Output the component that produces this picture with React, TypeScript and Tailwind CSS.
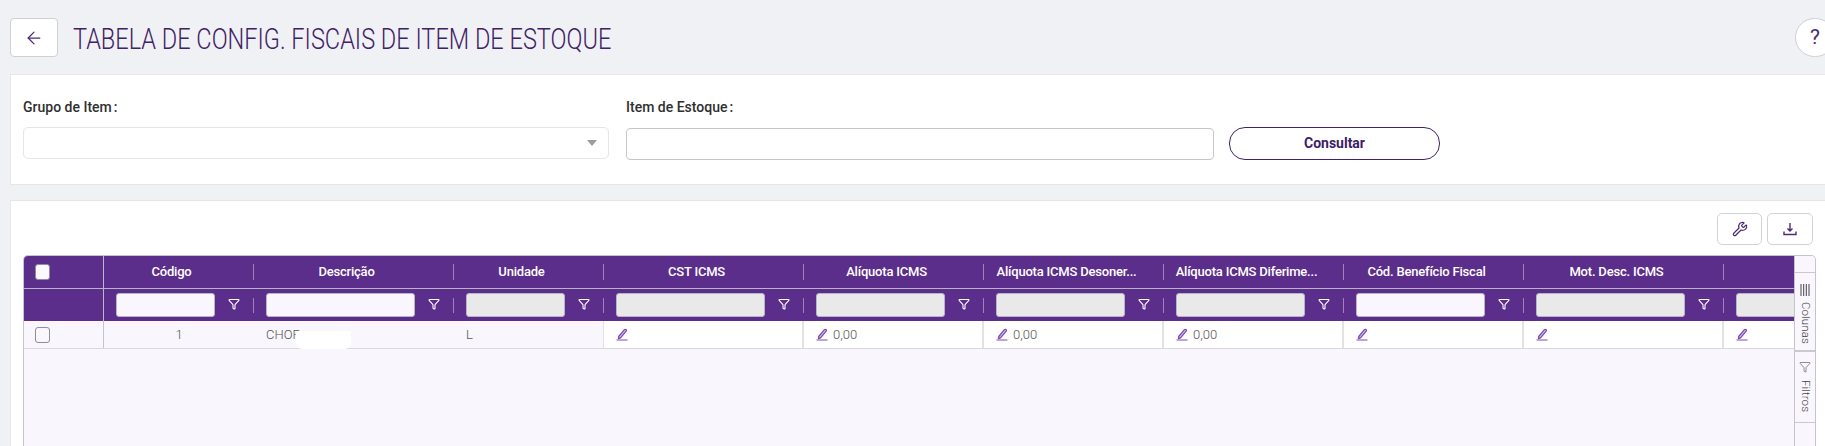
import React from "react";
import { ArrowLeft, Funnel, Wrench } from "lucide-react";

type Col = { w: string; label: string; light: boolean; editable: boolean; value?: string };

const cols: Col[] = [
  { w: "w-[150px]", label: "Código", light: true, editable: false },
  { w: "w-[200px]", label: "Descrição", light: true, editable: false },
  { w: "w-[150px]", label: "Unidade", light: false, editable: false },
  { w: "w-[200px]", label: "CST ICMS", light: false, editable: true },
  { w: "w-[180px]", label: "Alíquota ICMS", light: false, editable: true, value: "0,00" },
  { w: "w-[180px]", label: "Alíquota ICMS Desoner...", light: false, editable: true, value: "0,00" },
  { w: "w-[180px]", label: "Alíquota ICMS Diferime...", light: false, editable: true, value: "0,00" },
  { w: "w-[180px]", label: "Cód. Benefício Fiscal", light: true, editable: true },
  { w: "w-[200px]", label: "Mot. Desc. ICMS", light: false, editable: true },
  { w: "w-[200px]", label: "", light: false, editable: true },
];

function Pencil() {
  return (
    <svg width="12" height="13" viewBox="0 0 13 14" className="shrink-0 text-[#7e4bb5]">
      <path d="M3 9.2 9.1 1.8c.5-.5 1.2-.5 1.7-.1.5.4.6 1.1.2 1.6L4.9 10.7l-2.3.7z" fill="currentColor" fillOpacity="0.35" stroke="currentColor" strokeWidth="1.4" strokeLinejoin="round" />
      <path d="M0.5 13h12" stroke="currentColor" strokeWidth="1.2" />
    </svg>
  );
}

function Check({ light }: { light?: boolean }) {
  return <span className={`block w-[15px] h-[16px] rounded-[3px] border border-[#8b8f9c] ${light ? "bg-[#fbf9ff]" : "bg-[#f9f7fd]"}`} />;
}

export default function App() {
  return (
    <div className="w-[1825px] h-[446px] overflow-hidden bg-[#f0f1f5] pl-[10px] font-['Roboto',sans-serif]">
      <header className="flex items-center pt-[18px] h-[57px]">
        <button className="w-[48px] h-[39px] bg-white border border-[#cfcfd4] rounded-[4px] flex items-center justify-center text-[#4b2a75]">
          <ArrowLeft size={20} strokeWidth={1.5} />
        </button>
        <h1 className="ml-[15px] mt-[2px] text-[30px] leading-none text-[#3f2266] font-light whitespace-nowrap origin-left scale-x-[0.785]">
          TABELA DE CONFIG. FISCAIS DE ITEM DE ESTOQUE
        </h1>
        <button className="ml-auto -mr-[10px] w-10 h-[39px] rounded-full bg-white border border-[#cfcfd4] text-[#4b2a75] text-[21px] shrink-0">?</button>
      </header>

      <section className="mt-[17px] h-[111px] bg-white border-y border-l border-[#e6e6e9] pl-3 flex">
        <div className="w-[586px] shrink-0">
          <label className="block mt-[24px] h-[16px] leading-[16px] text-[14px] font-medium text-[#2f2f2f]">Grupo de Item<span className="ml-[2px]">:</span></label>
          <div className="mt-[12px] h-[32px] rounded-[5px] border border-[#e6e6e9] flex items-center justify-end pr-[11px]">
            <span className="w-0 h-0 border-x-[5px] border-x-transparent border-t-[6px] border-t-[#9b9b9b]" />
          </div>
        </div>
        <div className="w-[588px] ml-[17px] shrink-0">
          <label className="block mt-[24px] h-[16px] leading-[16px] text-[14px] font-medium text-[#2f2f2f]">Item de Estoque<span className="ml-[2px]">:</span></label>
          <div className="mt-[13px] h-[32px] rounded-[4px] border border-[#c6c6ca] bg-white" />
        </div>
        <button className="ml-[15px] mt-[52px] w-[211px] h-[33px] rounded-[16px] border border-[#40226b] text-[14px] font-bold text-[#3d2066]">
          Consultar
        </button>
      </section>

      <section className="mt-[15px] h-[260px] bg-white border-t border-l border-[#e6e6e9] pl-3 pr-[9px] overflow-hidden">
        <div className="flex justify-end gap-[5px] pt-[12px] mr-[3px]">
          <button className="w-[45px] h-[32px] rounded-[5px] border border-[#d2d2d6] flex items-center justify-center text-[#4b2a75]">
            <Wrench size={16} strokeWidth={1.8} />
          </button>
          <button className="w-[46px] h-[32px] rounded-[5px] border border-[#d2d2d6] flex items-center justify-center text-[#4b2a75]">
            <svg width="14" height="14" viewBox="0 0 14 14" fill="none" stroke="currentColor" strokeWidth="1.4">
              <path d="M7 1v7.5M4.5 6.5 7 9l2.5-2.5M1 9.5V12.5h12V9.5" />
            </svg>
          </button>
        </div>

        <div className="mt-[10px] h-[200px] flex border border-[#c4c4ca] border-b-0 rounded-t-[5px] bg-[#f9f7fd] overflow-hidden">
          <div className="flex-1 min-w-0 overflow-hidden">
            {/* Linha de títulos */}
            <div className="flex h-[33px] bg-[#5b2e8c] border-b border-[#b9b3c8]">
              <div className="w-[80px] shrink-0 border-r border-[#bdb8c9] flex items-center pl-[11px]">
                <Check light />
              </div>
              {cols.map((c, i) => (
                <div key={i} className={`${c.w} shrink-0 relative flex items-center justify-center pr-[15px] text-[13px] tracking-[-0.2px] font-medium text-white whitespace-nowrap`}>
                  {c.label}
                  <span className="absolute right-0 top-[8px] h-[16px] w-px bg-[#9c84bb]" />
                </div>
              ))}
            </div>
            {/* Linha de filtros */}
            <div className="flex h-[32px] bg-[#5b2e8c]">
              <div className="w-[80px] shrink-0 border-r border-[#bdb8c9]" />
              {cols.map((c, i) => (
                <div key={i} className={`${c.w} shrink-0 relative flex items-center pl-[12px] pr-[39px]`}>
                  <span className={`block w-full h-[24px] rounded-[3px] border border-[#b9b3c8] ${c.light ? "bg-[#f9f7fd]" : "bg-[#e9e9e9]"}`} />
                  <Funnel size={12} strokeWidth={2.2} className="absolute right-[14px] top-[9px] text-white" />
                  <span className="absolute right-0 top-[9px] h-[15px] w-px bg-[#9c84bb]" />
                </div>
              ))}
            </div>
            {/* Dados */}
            <div className="flex h-[28px] border-b border-[#d8d8dc] text-[13px] text-[#555] font-light">
              <div className="w-[80px] shrink-0 border-r border-[#c4c4ca] flex items-center pl-[11px]">
                <Check />
              </div>
              {cols.map((c, i) => {
                if (!c.editable) {
                  return (
                    <div key={i} className={`${c.w} shrink-0 relative flex items-center ${i === 0 ? "justify-center" : "pl-[12px]"} ${i === 2 ? "border-r border-[#e2e2e4]" : ""}`}>
                      {i === 0 ? "1" : i === 1 ? "CHOP" : "L"}
                      {i === 1 && <span className="absolute left-[42px] top-[10px] w-[55px] h-[18px] bg-white rounded-b-[6px]" />}
                    </div>
                  );
                }
                return (
                  <div key={i} className={`${c.w} shrink-0 bg-white border-r-2 border-[#e2e2e4] flex items-center gap-[5px] pl-[12px]`}>
                    <Pencil />
                    {c.value && <span>{c.value}</span>}
                  </div>
                );
              })}
            </div>
          </div>

          {/* Barra lateral */}
          <aside className="w-[21px] shrink-0 border-l border-[#c4c4ca] bg-[#f9f7fd] flex flex-col text-[11.5px] font-light text-[#444]">
            <div className="h-[17px] border-b border-[#c9c9ce]" />
            <div className="h-[79px] border-b-2 border-[#c9c9ce] flex flex-col items-center pt-[11px] gap-[6px]">
              <svg width="10" height="12" viewBox="0 0 10 12" stroke="currentColor" strokeWidth="1" className="shrink-0">
                <path d="M1 0v12M3.7 0v12M6.3 0v12M9 0v12" />
              </svg>
              <span className="[writing-mode:vertical-rl] tracking-[0.1px] leading-none">Colunas</span>
            </div>
            <div className="h-[71px] border-b border-[#c9c9ce] flex flex-col items-center pt-[9px] gap-[7px]">
              <Funnel size={12} strokeWidth={1.2} className="shrink-0" />
              <span className="[writing-mode:vertical-rl] tracking-[0.1px] leading-none">Filtros</span>
            </div>
          </aside>
        </div>
      </section>
    </div>
  );
}
